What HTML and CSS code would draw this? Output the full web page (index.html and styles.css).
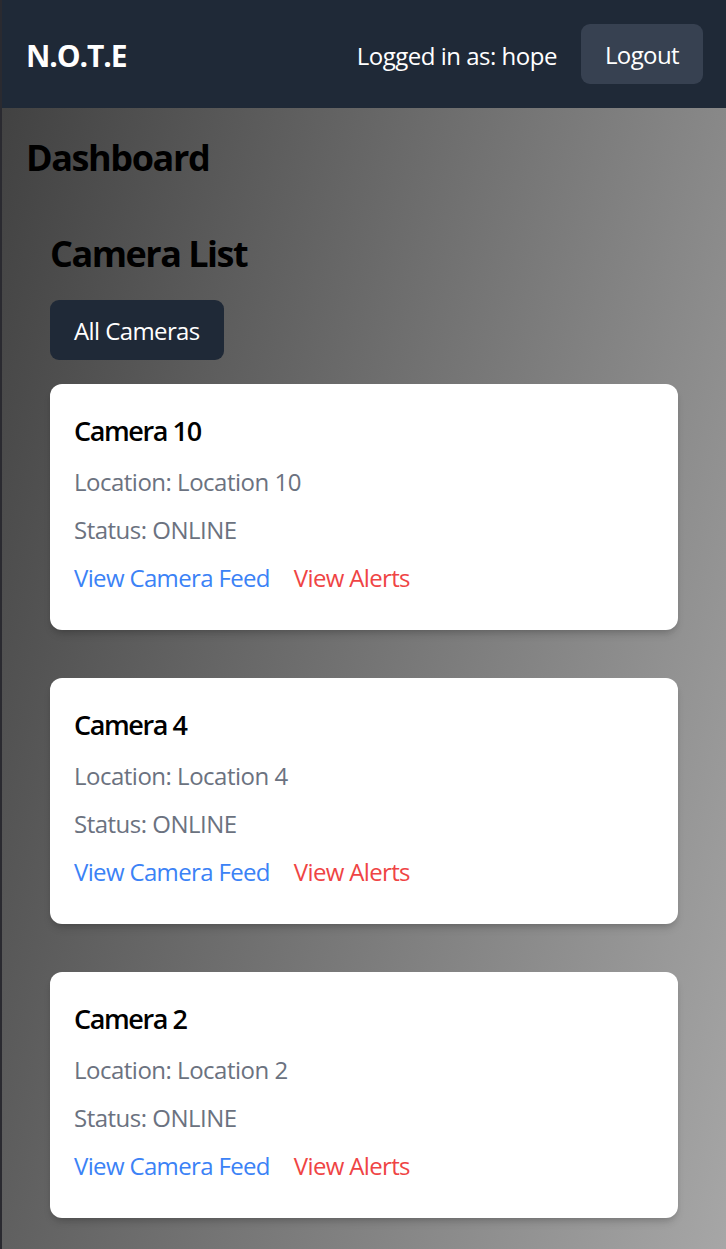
FILE: index.html
```html
<!DOCTYPE html>
<html lang="en">
<head>
<meta charset="utf-8">
<title>N.O.T.E Dashboard</title>
<link rel="stylesheet" href="styles.css">
</head>
<body>
<div class="app">
  <header class="topbar">
    <div class="logo">N.O.T.E</div>
    <div class="user">
      <span class="user-label">Logged in as: hope</span>
      <button class="btn btn-logout">Logout</button>
    </div>
  </header>
  <main class="main">
    <h1 class="page-title">Dashboard</h1>
    <section class="camera-section">
      <h2 class="section-title">Camera List</h2>
      <button class="btn btn-filter">All Cameras</button>
      <div class="card">
        <h3 class="card-title">Camera 10</h3>
        <p class="card-text">Location: Location 10</p>
        <p class="card-text">Status: ONLINE</p>
        <div class="card-links"><a class="link link-feed">View Camera Feed</a><a class="link link-alerts">View Alerts</a></div>
      </div>
      <div class="card">
        <h3 class="card-title">Camera 4</h3>
        <p class="card-text">Location: Location 4</p>
        <p class="card-text">Status: ONLINE</p>
        <div class="card-links"><a class="link link-feed">View Camera Feed</a><a class="link link-alerts">View Alerts</a></div>
      </div>
      <div class="card">
        <h3 class="card-title">Camera 2</h3>
        <p class="card-text">Location: Location 2</p>
        <p class="card-text">Status: ONLINE</p>
        <div class="card-links"><a class="link link-feed">View Camera Feed</a><a class="link link-alerts">View Alerts</a></div>
      </div>
    </section>
  </main>
</div>
</body>
</html>
```
FILE: styles.css
```css
* { box-sizing: border-box; }
html, body { margin: 0; padding: 0; }
body {
  font-family: "Open Sans", "Noto Sans", sans-serif;
  background: #2a2a30;
  padding-left: 2px;
  min-height: 1249px;
  letter-spacing: -0.5px;
}
.app {
  min-height: 1249px;
  background: linear-gradient(105deg, #3f3f3f, #a8a8a8);
}
.topbar {
  display: flex;
  justify-content: space-between;
  align-items: center;
  height: 108px;
  padding: 0 23px 0 24px;
  background: #1f2937;
  color: #fff;
}
.logo {
  font-size: 30px;
  font-weight: 700;
  line-height: 42px;
  padding-top: 4px;
  letter-spacing: -1.1px;
}
.user {
  display: flex;
  align-items: center;
  gap: 24px;
}
.user-label {
  font-size: 24px;
  line-height: 36px;
  padding-top: 4px;
  letter-spacing: -0.5px;
}
.btn {
  font-family: inherit;
  font-size: 24px;
  line-height: 36px;
  letter-spacing: -0.6px;
  border: 0;
  color: #fff;
  padding: 13px 24px 11px;
  border-radius: 9px;
  cursor: pointer;
}
.btn-logout { background: #374151; }
.main { padding: 26px 24px 24px; }
.page-title {
  margin: 0 0 22px;
  font-size: 36px;
  line-height: 48px;
  font-weight: 700;
  color: #000;
  letter-spacing: -1.4px;
}
.camera-section { padding: 26px 24px 24px; }
.section-title {
  margin: 0 0 22px;
  font-size: 36px;
  line-height: 48px;
  font-weight: 700;
  color: #000;
  letter-spacing: -1.5px;
}
.btn-filter {
  display: block;
  background: #1f2937;
  margin-bottom: 24px;
}
.card {
  background: #fff;
  border-radius: 12px;
  padding: 26px 24px 22px;
  margin-bottom: 48px;
  box-shadow: 0 6px 9px -2px rgba(0,0,0,0.15), 0 3px 6px -3px rgba(0,0,0,0.15);
}
.card-title {
  margin: 0 0 12px;
  font-size: 27px;
  line-height: 42px;
  font-weight: 600;
  color: #000;
  letter-spacing: -1.4px;
}
.card-text {
  margin: 0 0 12px;
  font-size: 24px;
  line-height: 36px;
  color: #6b7280;
}
.card-links {
  display: flex;
  gap: 24px;
  margin-bottom: 12px;
  font-size: 24px;
  line-height: 36px;
  letter-spacing: -0.65px;
}
.link { text-decoration: none; cursor: pointer; }
.link-feed { color: #3b82f6; }
.link-alerts { color: #ef4444; }
```
